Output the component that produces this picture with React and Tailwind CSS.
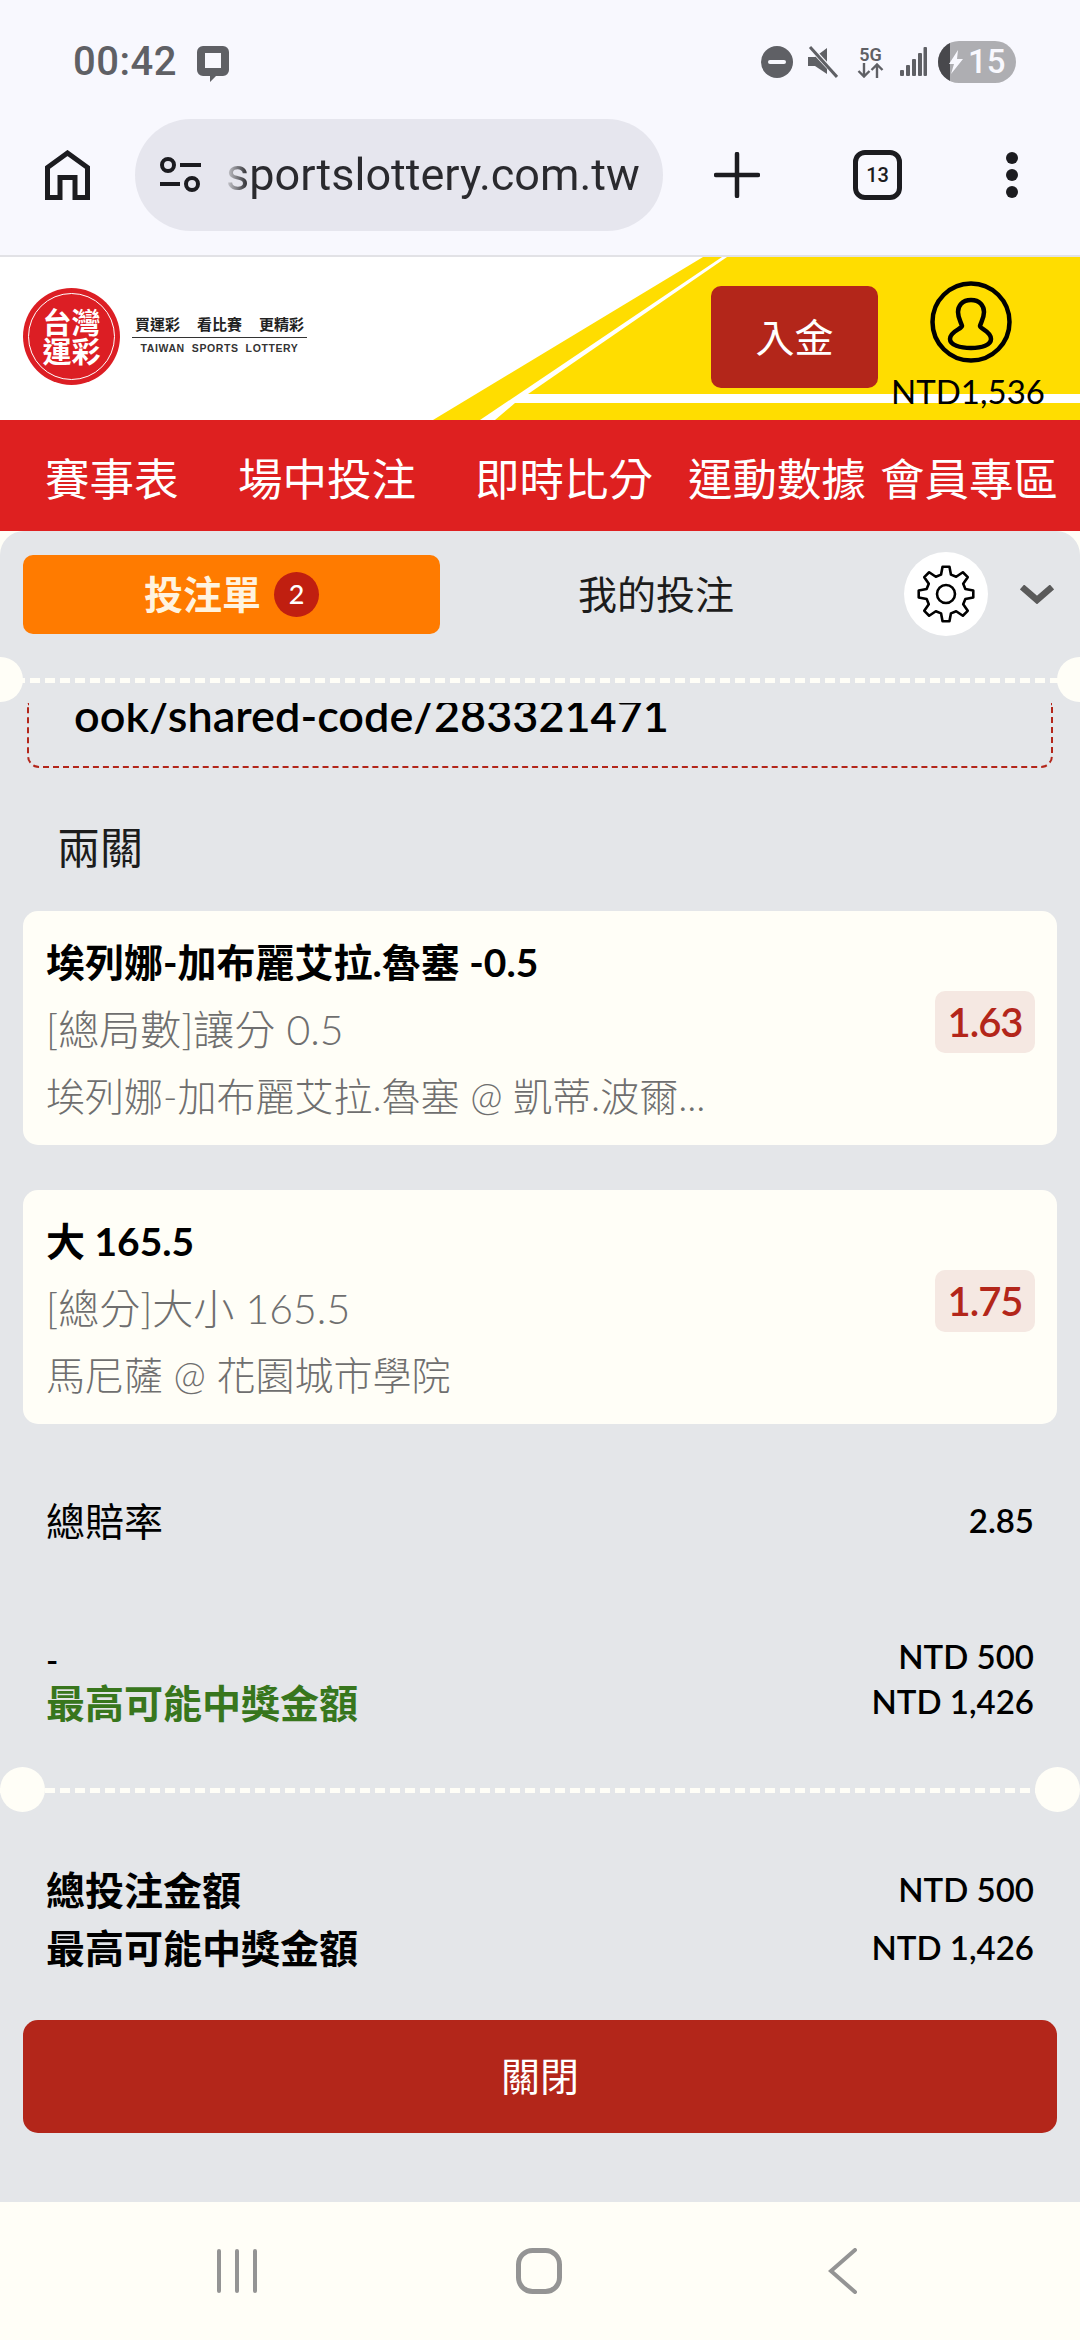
import React from "react";

const FONT = "font-['Lato','Noto_Sans_CJK_TC',sans-serif]";

function gearPoints() {
  const pts = [];
  const teeth = 8;
  for (let i = 0; i < teeth; i++) {
    const a = (i / teeth) * Math.PI * 2 - Math.PI / 2;
    const step = (Math.PI * 2) / teeth;
    const p = (r, off) => `${(30 + r * Math.cos(a + off * step)).toFixed(2)},${(30 + r * Math.sin(a + off * step)).toFixed(2)}`;
    pts.push(p(27.5, -0.16), p(27.5, 0.16), p(20, 0.32), p(20, 0.68));
  }
  return pts.join(" ");
}

function Divider({ edge }) {
  return (
    <div className="relative h-[46px] flex items-center">
      <div className={`w-full h-[5px] bg-[repeating-linear-gradient(90deg,#fffef7_0_10px,transparent_10px_15px)]`} />
      <div className={`absolute top-0 w-[45px] h-[45px] rounded-full bg-[#fffef7] ${edge ? "left-[-22px]" : "left-0"}`} />
      <div className={`absolute top-0 w-[45px] h-[45px] rounded-full bg-[#fffef7] ${edge ? "right-[-22px]" : "right-0"}`} />
    </div>
  );
}

function BetCard({ title, market, teams, odds, className }) {
  return (
    <div className={`mx-[23px] h-[234px] rounded-[15px] bg-[#fffef7] pl-[23px] pr-[22px] flex items-center justify-between ${className || ""}`}>
      <div className="flex flex-col pt-[2px]">
        <div className="text-[39px] leading-[67px] font-bold text-black">{title}</div>
        <div className="text-[41px] leading-[67px] font-light text-[#6f6f6f]">{market}</div>
        <div className="text-[39px] leading-[67px] font-light text-[#6f6f6f]">{teams}</div>
      </div>
      <div className="w-[100px] h-[62px] rounded-[10px] bg-[#f5e8e2] flex items-center justify-center text-[40px] font-semibold text-[#b3261a] tracking-[-1px] -mt-[13px]">
        {odds}
      </div>
    </div>
  );
}

export default function App() {
  const tailRow = "flex justify-between items-center";

  return (
    <div className={`w-[1080px] h-[2340px] overflow-hidden flex flex-col bg-[#fffef7] ${FONT}`}>
      {/* barra do sistema + navegador */}
      <div className="h-[255px] bg-[#f8f8fe] flex flex-col font-['Roboto',sans-serif]">
        <div className="h-[119px] pt-[41px] pl-[73px] pr-[64px] flex items-start">
          <span className="text-[40px] leading-[42px] font-medium text-[#5f6065] tracking-[0.5px]">00:42</span>
          <svg className="ml-[20px] mt-[5px]" width="32" height="36" viewBox="0 0 32 36">
            <path fillRule="evenodd" fill="#5f6065" d="M6 0h20a6 6 0 0 1 6 6v18a6 6 0 0 1-6 6h-7l-6 6v-6H6a6 6 0 0 1-6-6V6a6 6 0 0 1 6-6zM8 7v15h16V7z" />
          </svg>
          <div className="ml-auto flex items-center h-[42px]">
            <svg width="32" height="32" viewBox="0 0 32 32">
              <circle cx="16" cy="16" r="16" fill="#5f6065" />
              <rect x="7" y="14" width="18" height="4" rx="2" fill="#f8f8fe" />
            </svg>
            <svg className="ml-[15px]" width="30" height="32" viewBox="0 0 30 32">
              <path fill="#5f6065" d="M0 11h7l12-9v26L7 20H0z" />
              <path stroke="#f8f8fe" strokeWidth="5" d="M1 0l28 30" />
              <path stroke="#5f6065" strokeWidth="3" d="M2 1l27 30" />
            </svg>
            <div className="ml-[19px] w-[27px] flex flex-col items-center text-[#5f6065]">
              <span className="text-[18px] leading-[17px] font-semibold">5G</span>
              <svg width="27" height="15" viewBox="0 0 27 15" fill="none" stroke="#5f6065" strokeWidth="2.4">
                <path d="M7 0v13M1.5 8l5.5 5.5L12.500 8M20 15V2M14.500 7L20 1.500 25.500 7" />
              </svg>
            </div>
            <svg className="ml-[16px]" width="27" height="30" viewBox="0 0 27 30" fill="#5f6065">
              <rect x="0" y="23" width="4" height="6" rx="1" />
              <rect x="6" y="18" width="4" height="11" rx="1" />
              <rect x="12" y="12" width="4" height="17" rx="1" />
              <rect x="18" y="6" width="4" height="23" rx="1" />
              <rect x="23.500" y="0" width="3.500" height="29" rx="1" />
            </svg>
            <div className="ml-[11px] relative w-[78px] h-[42px] rounded-full bg-[#aeaeb2] overflow-hidden flex items-center">
              <div className="absolute left-0 top-0 bottom-0 w-[12px] bg-[#48484c]" />
              <svg className="relative ml-[11px]" width="14" height="24" viewBox="0 0 14 24">
                <path fill="#f8f8fe" d="M9 0L0 14h5l-3 10 12-15H8z" />
              </svg>
              <span className="relative ml-[5px] text-[33px] leading-[42px] font-medium text-[#f8f8fe]">15</span>
            </div>
          </div>
        </div>

        <div className="h-[112px] flex items-center">
          <svg className="ml-[45px]" width="45" height="50" viewBox="0 0 45 50" fill="none" stroke="#1c1c20" strokeWidth="5">
            <path d="M2.500 47.500V17.500L22.500 3l20 14.500v30H30V27.500H15v20z" />
          </svg>
          <div className="ml-[45px] w-[528px] h-[112px] rounded-full bg-[#e6e6ee] flex items-center overflow-hidden">
            <svg className="ml-[25px] shrink-0" width="41" height="36" viewBox="0 0 41 36" fill="none" stroke="#1c1c20" strokeWidth="4">
              <circle cx="8" cy="8" r="6" />
              <path d="M20 8h21M0 27h20" />
              <circle cx="32" cy="27" r="6" />
            </svg>
            <span className="ml-[25px] text-[45px] leading-[56px] text-[#2a2a2e] bg-[linear-gradient(90deg,#d0d0d6_0px,#2a2a2e_22px)] bg-clip-text [-webkit-text-fill-color:transparent] whitespace-nowrap">
              sportslottery.com.tw
            </span>
          </div>
          <svg className="ml-[51px]" width="46" height="46" viewBox="0 0 46 46" stroke="#1c1c20" strokeWidth="4.500" strokeLinecap="round">
            <path d="M23 2v42M2 23h42" />
          </svg>
          <div className="ml-[93px] w-[49px] h-[50px] rounded-[12px] border-[5px] border-[#1c1c20] flex items-center justify-center text-[20px] font-medium text-[#1c1c20]">
            13
          </div>
          <div className="ml-[104px] flex flex-col gap-[5px]">
            <div className="w-[12px] h-[12px] rounded-full bg-[#1c1c20]" />
            <div className="w-[12px] h-[12px] rounded-full bg-[#1c1c20]" />
            <div className="w-[12px] h-[12px] rounded-full bg-[#1c1c20]" />
          </div>
        </div>
      </div>
      <div className="h-[2px] bg-[#e2e2e6]" />

      {/* header do site */}
      <header className="relative h-[163px] bg-white flex items-start">
        <svg className="absolute inset-0" width="1080" height="163" viewBox="0 0 1080 163">
          <path fill="#ffdd00" d="M703 0h19L480 163h-47z" />
          <path fill="#ffdd00" d="M727 0H1080V137H528z" />
          <path fill="#ffdd00" d="M515 146H1080V163H495z" />
        </svg>

        <div className="relative ml-[23px] mt-[31px] w-[97px] h-[97px] rounded-full bg-[#dc1e24] flex items-center justify-center">
          <div className="w-[87px] h-[87px] rounded-full border-[1.5px] border-white flex flex-col items-center justify-center text-white font-bold text-[29px]">
            <span className="block h-[29px] leading-[29px]">台灣</span>
            <span className="block h-[29px] leading-[29px]">運彩</span>
          </div>
        </div>
        <div className="relative ml-[12px] mt-[56px] w-[175px] flex flex-col items-center font-['Liberation_Sans','Noto_Sans_CJK_TC',sans-serif]">
          <div className="flex gap-[17px] text-[15px] leading-[22px] font-bold text-[#222222] font-['Noto_Sans_CJK_TC',sans-serif]">
            <span>買運彩</span>
            <span>看比賽</span>
            <span>更精彩</span>
          </div>
          <div className="w-full h-[1px] bg-[#333333] mt-[2px]" />
          <div className="text-[10.500px] leading-[20px] font-bold text-[#333333] tracking-[0.6px] whitespace-pre">TAIWAN  SPORTS  LOTTERY</div>
        </div>

        <div className="relative ml-auto mt-[29px] w-[167px] h-[102px] rounded-[10px] bg-[#b3261a] flex items-center justify-center text-[39px] text-white">
          入金
        </div>
        <div className="relative ml-[13px] mr-[35px] mt-[24px] w-[154px] flex flex-col items-center">
          <svg className="ml-[6px]" width="82" height="82" viewBox="0 0 82 82" fill="none" stroke="#000000" strokeWidth="4.500">
            <circle cx="41" cy="41" r="38.500" />
            <path d="M41 19C32 19 28 25 28 31C28 37 31 41 32 45C32 48 20 50 20 58C20 64 30 67 41 67C52 67 61 64 61 58C61 50 50 48 50 45C51 41 54 37 54 31C54 25 50 19 41 19Z" />
          </svg>
          <span className="mt-[8px] text-[33px] leading-[40px] text-black whitespace-nowrap">NTD1,536</span>
        </div>
      </header>

      {/* menu */}
      <nav className="h-[111px] bg-[#de2020] flex items-center pt-[6px] text-[44.500px] leading-[60px] text-white whitespace-nowrap">
        <span className="ml-[45px]">賽事表</span>
        <span className="ml-[59.500px]">場中投注</span>
        <span className="ml-[59px]">即時比分</span>
        <span className="ml-[35px]">運動數據</span>
        <span className="ml-[14px]">會員專區</span>
      </nav>

      {/* painel do cupom */}
      <main className="h-[1671px] bg-[#e4e6e9] rounded-t-[24px] flex flex-col overflow-hidden">
        <div className="h-[126px] flex items-center shrink-0">
          <div className="ml-[23px] w-[417px] h-[79px] rounded-[10px] bg-[#ff7b00] flex items-center justify-center gap-[13px]">
            <span className="text-[39px] leading-[50px] font-bold text-[#fff3df]">投注單</span>
            <span className="w-[45px] h-[45px] rounded-full bg-[#c01f10] flex items-center justify-center text-[27px] font-medium text-white">2</span>
          </div>
          <span className="ml-[138px] text-[39px] leading-[50px] text-[#1c1c1c]">我的投注</span>
          <div className="ml-[170px] w-[84px] h-[84px] rounded-full bg-white flex items-center justify-center">
            <svg width="60" height="60" viewBox="0 0 60 60" fill="none" stroke="#000000" strokeWidth="2.600" strokeLinejoin="round">
              <polygon points={gearPoints()} />
              <circle cx="30" cy="30" r="9" />
            </svg>
          </div>
          <svg className="ml-[32px]" width="34" height="19" viewBox="0 0 34 19" fill="none" stroke="#5a5a5a" strokeWidth="6.500">
            <path d="M2 2l15 13L32 2" />
          </svg>
        </div>

        <Divider edge />

        <div className="h-[65px] mx-[27px] shrink-0 overflow-hidden border-x-2 border-b-2 border-dashed border-[#b3261a] rounded-b-[12px] pl-[45px]">
          <div className="-mt-[13px] text-[45px] leading-[50px] font-semibold text-black whitespace-nowrap">ook/shared-code/283321471</div>
        </div>

        <div className="ml-[57px] mt-[50px] text-[43px] leading-[60px] text-[#1c1c1c] shrink-0">兩關</div>

        <BetCard
          className="mt-[33px] shrink-0"
          title="埃列娜-加布麗艾拉.魯塞 -0.5"
          market="[總局數]讓分 0.5"
          teams="埃列娜-加布麗艾拉.魯塞 @ 凱蒂.波爾..."
          odds="1.63"
        />
        <BetCard
          className="mt-[45px] shrink-0"
          title="大 165.5"
          market="[總分]大小 165.5"
          teams="馬尼薩 @ 花園城市學院"
          odds="1.75"
        />

        <div className="px-[46px] shrink-0">
          <div className={`${tailRow} mt-[67px] h-[60px]`}>
            <span className="text-[39px] text-black">總賠率</span>
            <span className="text-[33px] font-semibold text-black">2.85</span>
          </div>
          <div className={`${tailRow} mt-[83px] h-[45px]`}>
            <span className="text-[33px] font-semibold text-black translate-y-[3px]">-</span>
            <span className="text-[33px] font-semibold text-black">NTD 500</span>
          </div>
          <div className={`${tailRow} h-[45px]`}>
            <span className="text-[39px] font-bold text-[#38761d] translate-y-[2px]">最高可能中獎金額</span>
            <span className="text-[33px] font-semibold text-black">NTD 1,426</span>
          </div>
        </div>

        <div className="mt-[43px] shrink-0">
          <Divider />
        </div>

        <div className="px-[46px] mt-[48px] shrink-0">
          <div className={`${tailRow} h-[58px]`}>
            <span className="text-[39px] font-bold text-black">總投注金額</span>
            <span className="text-[33px] font-semibold text-black">NTD 500</span>
          </div>
          <div className={`${tailRow} h-[58px]`}>
            <span className="text-[39px] font-bold text-black">最高可能中獎金額</span>
            <span className="text-[33px] font-semibold text-black">NTD 1,426</span>
          </div>
        </div>

        <div className="mx-[23px] mt-[43px] h-[113px] rounded-[15px] bg-[#b3261a] flex items-center justify-center text-[39px] text-white shrink-0">
          關閉
        </div>
      </main>

      {/* barra de navegação do android */}
      <div className="h-[138px] bg-[#fffef7] flex items-center pl-[216px]">
        <svg width="42" height="44" viewBox="0 0 42 44" stroke="#949494" strokeWidth="4" strokeLinecap="round">
          <path d="M3 2v40M21 2v40M39 2v40" />
        </svg>
        <svg className="ml-[258px]" width="46" height="46" viewBox="0 0 46 46" fill="none" stroke="#949494" strokeWidth="5">
          <rect x="2.500" y="2.500" width="41" height="41" rx="14" />
        </svg>
        <svg className="ml-[266px]" width="30" height="46" viewBox="0 0 30 46" fill="none" stroke="#949494" strokeWidth="4" strokeLinecap="round">
          <path d="M27 2L3 23l24 21" />
        </svg>
      </div>
    </div>
  );
}
